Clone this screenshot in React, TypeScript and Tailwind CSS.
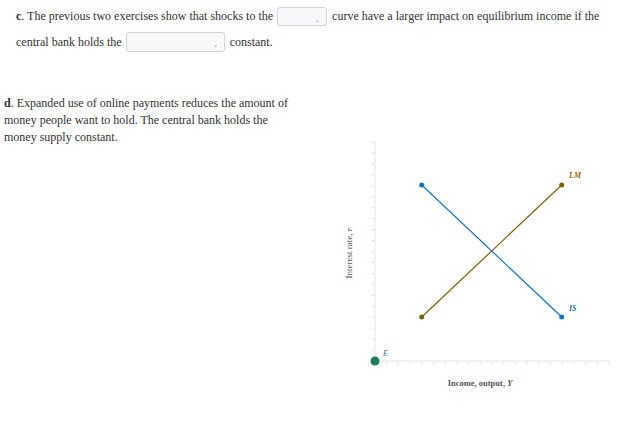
import React from "react";

function Caret() {
  return <span className="absolute right-[6px] top-[9px] text-[6px] leading-none text-[#888]">⌄</span>;
}

function Graph() {
  const yTicks = Array.from({ length: 21 }, (_, k) => 142 + k * 10.95);
  const xTicks = Array.from({ length: 21 }, (_, k) => 375 + k * 11.7);
  return (
    <svg width={298} height={300} viewBox="330 95 298 300" className="block">
      <line x1={375} y1={142} x2={375} y2={361} stroke="#e3e3e3" strokeWidth={1} />
      {yTicks.map((y, i) => (
        <line key={"y" + i} x1={371} y1={y} x2={375} y2={y} stroke="#e3e3e3" strokeWidth={1} />
      ))}
      <line x1={375} y1={361} x2={609} y2={361} stroke="#e3e3e3" strokeWidth={1} />
      {xTicks.map((x, i) => (
        <line key={"x" + i} x1={x} y1={361} x2={x} y2={365} stroke="#e3e3e3" strokeWidth={1} />
      ))}
      <line x1={421.7} y1={185} x2={561.7} y2={317} stroke="#1572c2" strokeWidth={1.2} />
      <circle cx={421.7} cy={185} r={2.5} fill="#1572c2" />
      <circle cx={561.7} cy={317} r={2.5} fill="#1572c2" />
      <line x1={421.7} y1={317} x2={561.7} y2={185} stroke="#7a6212" strokeWidth={1.2} />
      <circle cx={421.7} cy={317} r={2.5} fill="#7a6212" />
      <circle cx={561.7} cy={185} r={2.5} fill="#7a6212" />
      <circle cx={375} cy={361} r={4.5} fill="#1e7d5e" />
      <text x={383} y={356} fontSize={8} fontStyle="italic" fill="#2b7a8a" fontFamily="'Liberation Serif', serif">E</text>
      <text x={569} y={178} fontSize={8} fontStyle="italic" fontWeight="bold" fill="#8a6c16" fontFamily="'Liberation Serif', serif">LM</text>
      <text x={569} y={311} fontSize={8} fontStyle="italic" fontWeight="bold" fill="#1f6fb5" fontFamily="'Liberation Serif', serif">IS</text>
      <text
        x={352}
        y={253}
        fontSize={9}
        fill="#555"
        textAnchor="middle"
        transform="rotate(-90 352 253)"
        fontFamily="'Liberation Serif', serif"
      >
        Interest rate, <tspan fontStyle="italic">r</tspan>
      </text>
      <text x={480} y={386} fontSize={8.5} fontWeight="bold" fill="#555" textAnchor="middle" fontFamily="'Liberation Serif', serif">
        Income, output, <tspan fontStyle="italic">Y</tspan>
      </text>
    </svg>
  );
}

export default function App() {
  return (
    <div className="h-[441px] w-[628px] bg-white text-[12px] text-[#333]" style={{ fontFamily: "'Liberation Serif', 'Times New Roman', serif" }}>
      <div className="pl-[16px] pt-[3px]">
        <div className="flex h-[26px] items-center whitespace-nowrap">
          <span><b>c</b>. The previous two exercises show that shocks to the</span>
          <span className="relative ml-[4px] inline-flex h-[19px] w-[50px] rounded-[3px] border border-[#cfd4da] bg-[#f7f8fa]"><Caret /></span>
          <span className="ml-[5px]">curve have a larger impact on equilibrium income if the</span>
        </div>
        <div className="flex h-[26px] items-center whitespace-nowrap">
          <span>central bank holds the</span>
          <span className="relative ml-[4px] inline-flex h-[20px] w-[99px] rounded-[3px] border border-[#cfd4da] bg-[#f7f8fa]"><Caret /></span>
          <span className="ml-[5px]">constant.</span>
        </div>
      </div>
      <div className="mt-[40px] flex">
        <p className="w-[330px] pl-[4px] pr-[40px] leading-[17px]">
          <b>d</b>. Expanded use of online payments reduces the amount of money people want to hold. The central bank holds the money supply constant.
        </p>
        <Graph />
      </div>
    </div>
  );
}
